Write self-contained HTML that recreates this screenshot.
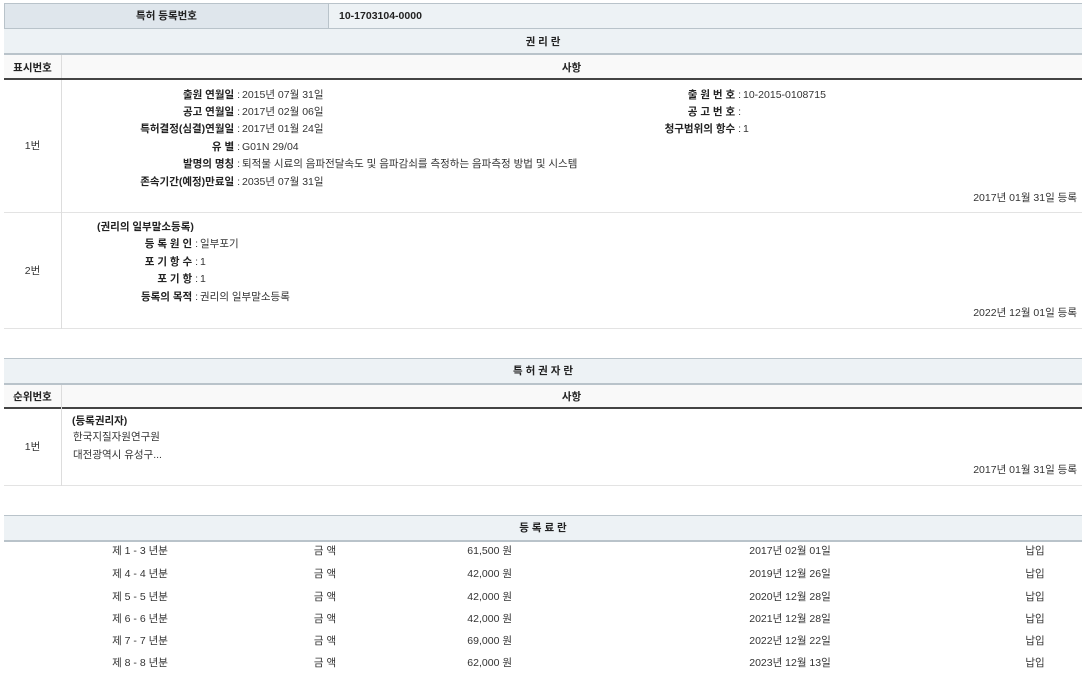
<!DOCTYPE html>
<html><head><meta charset="utf-8"><style>
*{margin:0;padding:0;box-sizing:border-box}
body{width:1082px;height:675px;background:#fff;font-family:"Liberation Sans","Noto Sans CJK KR",sans-serif;font-size:10.5px;color:#333;position:relative;overflow:hidden}
.a{position:absolute;white-space:nowrap;line-height:14px}
.box{position:absolute}
b{font-weight:bold;color:#222}
.c{text-align:center}
.r{text-align:right}
.hd{background:#edf2f5;border-top:1px solid #b9c3ca;border-bottom:2px solid #b9c3ca}
.ch{background:#f9f9f9;border-bottom:2px solid #444}
.row{border-bottom:1px solid #e3e3e3}
.vl{position:absolute;width:1px;background:#ddd}
</style></head><body>
<!-- top table -->
<div class="box" style="left:4px;top:3px;width:325px;height:26px;background:#dfe6ec;border:1px solid #b9c3ca;border-right:1px solid #b9c3ca"></div>
<div class="box" style="left:329px;top:3px;width:753px;height:26px;background:#edf2f5;border-top:1px solid #b9c3ca;border-bottom:1px solid #b9c3ca"></div>
<div class="a c" style="left:4px;top:9px;width:325px"><b>특허 등록번호</b></div>
<div class="a" style="left:339px;top:9px"><b>10-1703104-0000</b></div>
<div class="box hd" style="left:4px;top:28px;width:1078px;height:27px"></div>
<div class="a c" style="left:4px;top:35px;width:1078px"><b>권 리 란</b></div>
<div class="box ch" style="left:4px;top:55px;width:1078px;height:25px"></div>
<div class="vl" style="left:61px;top:55px;height:23px;background:#ddd"></div>
<div class="a c" style="left:4px;top:61px;width:57px"><b>표시번호</b></div>
<div class="a c" style="left:61px;top:61px;width:1021px"><b>사항</b></div>
<div class="box row" style="left:4px;top:80px;width:1078px;height:133px"></div>
<div class="box row" style="left:4px;top:213px;width:1078px;height:116px"></div>
<div class="vl" style="left:61px;top:80px;height:249px"></div>
<div class="a c" style="left:4px;top:139px;width:57px">1번</div>
<div class="a c" style="left:4px;top:264px;width:57px">2번</div>
<!-- row1 left -->
<div class="a r" style="left:0;top:88px;width:240px"><b>출원 연월일</b> :</div><div class="a" style="left:242px;top:88px">2015년 07월 31일</div>
<div class="a r" style="left:0;top:105px;width:240px"><b>공고 연월일</b> :</div><div class="a" style="left:242px;top:105px">2017년 02월 06일</div>
<div class="a r" style="left:0;top:122px;width:240px"><b>특허결정(심결)연월일</b> :</div><div class="a" style="left:242px;top:122px">2017년 01월 24일</div>
<div class="a r" style="left:0;top:140px;width:240px"><b>유 별</b> :</div><div class="a" style="left:242px;top:140px">G01N 29/04</div>
<div class="a r" style="left:0;top:157px;width:240px"><b>발명의 명칭</b> :</div><div class="a" style="left:242px;top:157px">퇴적물 시료의 음파전달속도 및 음파감쇠를 측정하는 음파측정 방법 및 시스템</div>
<div class="a r" style="left:0;top:175px;width:240px"><b>존속기간(예정)만료일</b> :</div><div class="a" style="left:242px;top:175px">2035년 07월 31일</div>
<!-- row1 right -->
<div class="a r" style="left:500px;top:88px;width:241px"><b>출 원 번 호</b> :</div><div class="a" style="left:743px;top:88px">10-2015-0108715</div>
<div class="a r" style="left:500px;top:105px;width:241px"><b>공 고 번 호</b> :</div>
<div class="a r" style="left:500px;top:122px;width:241px"><b>청구범위의 항수</b> :</div><div class="a" style="left:743px;top:122px">1</div>
<div class="a r" style="left:800px;top:191px;width:277px">2017년 01월 31일 등록</div>
<!-- row2 -->
<div class="a" style="left:97px;top:220px"><b>(권리의 일부말소등록)</b></div>
<div class="a r" style="left:0;top:237px;width:198px"><b>등 록 원 인</b> :</div><div class="a" style="left:200px;top:237px">일부포기</div>
<div class="a r" style="left:0;top:255px;width:198px"><b>포 기 항 수</b> :</div><div class="a" style="left:200px;top:255px">1</div>
<div class="a r" style="left:0;top:272px;width:198px"><b>포 기 항</b> :</div><div class="a" style="left:200px;top:272px">1</div>
<div class="a r" style="left:0;top:290px;width:198px"><b>등록의 목적</b> :</div><div class="a" style="left:200px;top:290px">권리의 일부말소등록</div>
<div class="a r" style="left:800px;top:306px;width:277px">2022년 12월 01일 등록</div>
<!-- table2 -->
<div class="box hd" style="left:4px;top:358px;width:1078px;height:27px"></div>
<div class="a c" style="left:4px;top:364px;width:1078px"><b>특 허 권 자 란</b></div>
<div class="box ch" style="left:4px;top:385px;width:1078px;height:24px"></div>
<div class="a c" style="left:4px;top:390px;width:57px"><b>순위번호</b></div>
<div class="a c" style="left:61px;top:390px;width:1021px"><b>사항</b></div>
<div class="box row" style="left:4px;top:409px;width:1078px;height:77px"></div>
<div class="vl" style="left:61px;top:385px;height:101px"></div>
<div class="a c" style="left:4px;top:440px;width:57px">1번</div>
<div class="a" style="left:72px;top:414px"><b>(등록권리자)</b></div>
<div class="a" style="left:73px;top:430px">한국지질자원연구원</div>
<div class="a" style="left:73px;top:448px">대전광역시 유성구...</div>
<div class="a r" style="left:800px;top:463px;width:277px">2017년 01월 31일 등록</div>
<!-- table3 -->
<div class="box hd" style="left:4px;top:515px;width:1078px;height:27px"></div>
<div class="a c" style="left:4px;top:521px;width:1078px"><b>등 록 료 란</b></div>
<div class="a c" style="left:60px;top:544px;width:160px">제 1 - 3 년분</div><div class="a c" style="left:285px;top:544px;width:80px">금 액</div><div class="a r" style="left:400px;top:544px;width:112px">61,500 원</div><div class="a c" style="left:710px;top:544px;width:160px">2017년 02월 01일</div><div class="a c" style="left:1005px;top:544px;width:60px">납입</div>
<div class="a c" style="left:60px;top:567px;width:160px">제 4 - 4 년분</div><div class="a c" style="left:285px;top:567px;width:80px">금 액</div><div class="a r" style="left:400px;top:567px;width:112px">42,000 원</div><div class="a c" style="left:710px;top:567px;width:160px">2019년 12월 26일</div><div class="a c" style="left:1005px;top:567px;width:60px">납입</div>
<div class="a c" style="left:60px;top:590px;width:160px">제 5 - 5 년분</div><div class="a c" style="left:285px;top:590px;width:80px">금 액</div><div class="a r" style="left:400px;top:590px;width:112px">42,000 원</div><div class="a c" style="left:710px;top:590px;width:160px">2020년 12월 28일</div><div class="a c" style="left:1005px;top:590px;width:60px">납입</div>
<div class="a c" style="left:60px;top:612px;width:160px">제 6 - 6 년분</div><div class="a c" style="left:285px;top:612px;width:80px">금 액</div><div class="a r" style="left:400px;top:612px;width:112px">42,000 원</div><div class="a c" style="left:710px;top:612px;width:160px">2021년 12월 28일</div><div class="a c" style="left:1005px;top:612px;width:60px">납입</div>
<div class="a c" style="left:60px;top:634px;width:160px">제 7 - 7 년분</div><div class="a c" style="left:285px;top:634px;width:80px">금 액</div><div class="a r" style="left:400px;top:634px;width:112px">69,000 원</div><div class="a c" style="left:710px;top:634px;width:160px">2022년 12월 22일</div><div class="a c" style="left:1005px;top:634px;width:60px">납입</div>
<div class="a c" style="left:60px;top:656px;width:160px">제 8 - 8 년분</div><div class="a c" style="left:285px;top:656px;width:80px">금 액</div><div class="a r" style="left:400px;top:656px;width:112px">62,000 원</div><div class="a c" style="left:710px;top:656px;width:160px">2023년 12월 13일</div><div class="a c" style="left:1005px;top:656px;width:60px">납입</div>
</body></html>
